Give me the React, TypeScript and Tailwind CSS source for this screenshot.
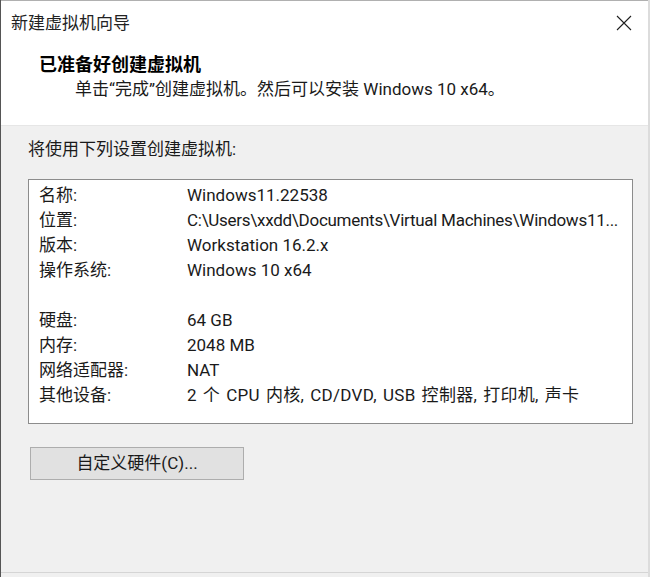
import React from 'react';

/**
 * 新建虚拟机向导 - final summary page
 */

interface SettingRow {
  label: string;
  value: string;
  /** extra classes for the value text */
  valueClass?: string;
}

const rows: (SettingRow | null)[] = [
  { label: '名称:', value: 'Windows11.22538' },
  {
    label: '位置:',
    value: 'C:\\Users\\xxdd\\Documents\\Virtual Machines\\Windows11...',
    valueClass: 'tracking-[-0.27px]',
  },
  { label: '版本:', value: 'Workstation 16.2.x' },
  { label: '操作系统:', value: 'Windows 10 x64' },
  null, // blank separator row
  { label: '硬盘:', value: '64 GB' },
  { label: '内存:', value: '2048 MB' },
  { label: '网络适配器:', value: 'NAT' },
  {
    label: '其他设备:',
    value: '2 个 CPU 内核, CD/DVD, USB 控制器, 打印机, 声卡',
    valueClass: 'tracking-[0.3px] [word-spacing:1.5px]',
  },
];

function CloseIcon(): JSX.Element {
  return (
    <svg width="16" height="16" viewBox="0 0 16 16" fill="none">
      <path d="M1 1L15 15M15 1L1 15" stroke="#1f1f1f" strokeWidth="1.1" />
    </svg>
  );
}

export default function App(): JSX.Element {
  return (
    <div
      className="w-[650px] h-[577px] flex flex-col bg-[#f0f0f0] text-[#1a1a1a] border-l border-l-[#555555] border-r-2 border-r-[#dcdcdc] overflow-hidden"
      style={{ fontFamily: "Roboto, 'Noto Sans CJK SC', sans-serif" }}
    >
      {/* Title bar */}
      <div className="h-[45px] shrink-0 bg-white flex items-center justify-between pl-[10px] pr-[16px] border-t border-t-[#b0b0b0]">
        <span className="text-[17px] leading-[24px] text-[#222222]">新建虚拟机向导</span>
        <CloseIcon />
      </div>

      {/* Header */}
      <div className="shrink-0 bg-white pt-[8px] pb-[24px] pl-[38px]">
        <div className="text-[18px] leading-[24px] font-bold text-black">已准备好创建虚拟机</div>
        <div className="ml-[36px] text-[17px] leading-[24px] text-[#1a1a1a]">
          单击“完成”创建虚拟机。然后可以安装 Windows 10 x64。
        </div>
      </div>

      {/* Body */}
      <div className="flex-1 flex flex-col pl-[27px] pt-[11px] border-t border-t-[#e6e6e6]">
        <div className="text-[17px] leading-[24px]">将使用下列设置创建虚拟机:</div>

        <div className="mt-[18px] w-[605px] bg-white border border-[#8c8c8c] pt-[3px] pb-[15px] pl-[10px]">
          {rows.map((row, i) =>
            row ? (
              <div key={i} className="grid grid-cols-[148px_1fr] text-[17px] leading-[25px] whitespace-nowrap">
                <span>{row.label}</span>
                <span className={row.valueClass}>{row.value}</span>
              </div>
            ) : (
              <div key={i} className="h-[25px]" />
            )
          )}
        </div>

        <button
          type="button"
          className="mt-[23px] ml-[2px] w-[214px] h-[33px] bg-[#e1e1e1] border border-[#adadad] text-[17px] text-[#1a1a1a]"
        >
          自定义硬件(C)...
        </button>
      </div>

      {/* Bottom separator */}
      <div className="h-[5px] shrink-0 border-t border-t-[#d5d5d5]" />
    </div>
  );
}
